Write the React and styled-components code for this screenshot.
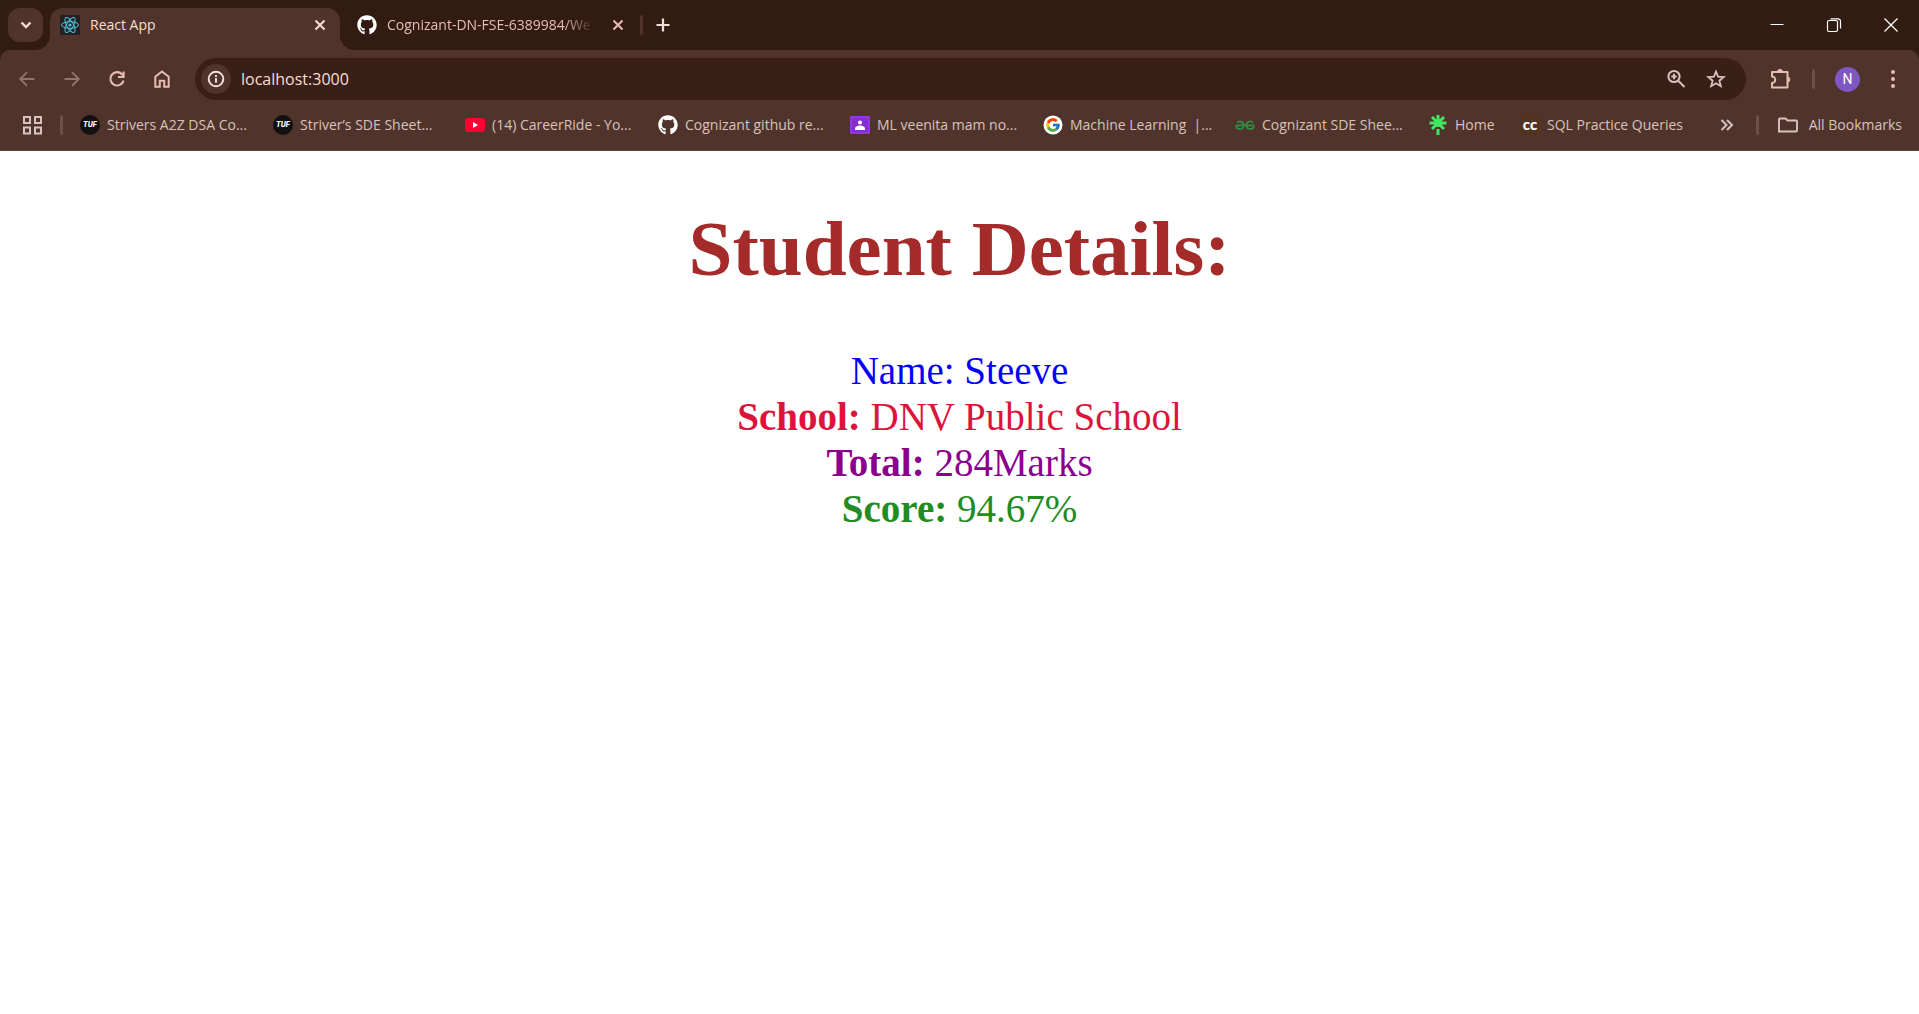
import React from "react";
import styled, { createGlobalStyle } from "styled-components";
import { FaGithub } from "react-icons/fa";
import { FcGoogle } from "react-icons/fc";

const frame = "#321b11";
const bar = "#50342b";
const field = "#3a1f16";
const rose = "#e7bdb1";
const sand = "#d8c2bc";
const cream = "#f5ded8";
const line = "#6f4f45";

const GlobalStyle = createGlobalStyle`
  * { box-sizing: border-box; }
  body { margin: 0; background: #fff; }
  button, input { font: inherit; color: inherit; border: 0; padding: 0; margin: 0; background: none; }
`;

const Browser = styled.div`
  font-family: "Open Sans", "Noto Sans", sans-serif;
  font-size: 14px;
  line-height: 20px;
  color: ${sand};
  background: ${frame};
`;

const TabStrip = styled.div`
  display: flex;
  align-items: stretch;
  height: 50px;
  padding-left: 8px;
`;

const TabSearch = styled.button`
  display: flex;
  align-items: center;
  justify-content: center;
  align-self: center;
  width: 35px;
  height: 34px;
  margin-right: 7px;
  border-radius: 12px;
  background: ${bar};
  color: ${cream};
`;

const Tab = styled.div`
  position: relative;
  display: flex;
  align-items: center;
  gap: 10px;
  width: ${(p) => (p.$active ? 290 : 300)}px;
  margin-top: ${(p) => (p.$active ? 8 : 0)}px;
  padding: ${(p) => (p.$active ? "0 10px 8px 10px" : "0 12px 0 17px")};
  border-radius: 13px 13px 0 0;
  color: ${(p) => (p.$active ? cream : rose)};
  background: ${(p) => (p.$active ? bar : "transparent")};
`;

const TabFoot = styled.span`
  position: absolute;
  bottom: 0;
  ${(p) => p.$side}: -15px;
  width: 15px;
  height: 15px;
  background: radial-gradient(
    circle at top ${(p) => p.$side},
    transparent 15px,
    ${bar} 15px
  );
`;

const TabTitle = styled.span`
  flex: 1;
  overflow: hidden;
  white-space: nowrap;
  font-size: 14px;
  mask-image: ${(p) =>
    p.$fade ? "linear-gradient(to right, #000 calc(100% - 34px), transparent calc(100% - 4px))" : "none"};
`;

const IconButton = styled.button`
  display: flex;
  align-items: center;
  justify-content: center;
  flex: none;
  width: ${(p) => p.$w || 20}px;
  height: ${(p) => p.$h || 20}px;
  color: ${(p) => p.$color || "inherit"};
`;

const Divider = styled.span`
  flex: none;
  width: 3px;
  height: 20px;
  margin-left: ${(p) => p.$left || 0}px;
  border-radius: 2px;
  background: ${line};
`;

const StripDivider = styled(Divider)`
  align-self: center;
  background: ${bar};
`;

const NewTab = styled(IconButton)`
  align-self: center;
  margin-left: 8px;
`;

const WindowControls = styled.div`
  display: flex;
  align-items: center;
  margin-left: auto;
  color: #fff;
`;

const Chrome = styled.div`
  background: ${bar};
  border-radius: 10px 10px 0 0;
  border-bottom: 1px solid #5f4840;
`;

const Toolbar = styled.div`
  display: flex;
  align-items: center;
  padding: 8px 4px 0;
`;

const Omnibox = styled.form`
  display: flex;
  align-items: center;
  flex: 1;
  height: 42px;
  margin: 0 11px;
  padding: 0 10px 0 6px;
  border-radius: 21px;
  background: ${field};
`;

const SiteInfo = styled.button`
  display: flex;
  align-items: center;
  justify-content: center;
  width: 30px;
  height: 30px;
  border-radius: 50%;
  background: ${bar};
  color: ${cream};
`;

const Address = styled.div`
  display: grid;
  flex: 1;
  padding-left: 10px;
  font-size: 16px;
  line-height: 24px;
`;

const AddressInput = styled.input`
  width: 100%;
  outline: none;
  color: ${cream};
`;

const Avatar = styled.button`
  flex: none;
  width: 25px;
  height: 25px;
  margin: 0 10px 0 20px;
  border-radius: 50%;
  background: #7e57c2;
  color: #fff;
  font-family: Roboto, sans-serif;
  font-size: 14px;
`;

const Bookmarks = styled.nav`
  display: flex;
  align-items: center;
  height: 50px;
  padding: 0 17px 0 22px;
`;

const BookmarkList = styled.div`
  display: flex;
  flex: 1;
  margin-left: 17px;
`;

const Bookmark = styled.a`
  display: flex;
  align-items: center;
  gap: ${(p) => p.$gap || 7}px;
  width: ${(p) => (p.$w ? `${p.$w}px` : "auto")};
  color: inherit;
  text-decoration: none;
  white-space: nowrap;
`;

const Badge = styled.span`
  display: flex;
  align-items: center;
  justify-content: center;
  flex: none;
  width: 20px;
  height: 20px;
  padding-bottom: ${(p) => (p.$round ? 0 : 3)}px;
  border-radius: ${(p) => (p.$round ? "50%" : "0")};
  background: ${(p) => p.$bg};
  color: #fff;
  font-family: ${(p) => (p.$round ? "Inter" : "Lato")}, sans-serif;
  font-size: ${(p) => (p.$round ? 7 : 15)}px;
  font-weight: ${(p) => (p.$round ? 800 : 900)};
  font-style: ${(p) => (p.$round ? "italic" : "normal")};
  line-height: 16px;
`;

const BookmarkEnd = styled.div`
  display: flex;
  align-items: center;
  gap: 19px;
`;

const Page = styled.main`
  padding: 53px 8px;
  font-family: "Liberation Serif", "Times New Roman", serif;
  font-size: 39px;
  line-height: 46px;
  text-align: center;
`;

const Heading = styled.h1`
  margin: 0 0 54px;
  font-size: 79px;
  line-height: 90px;
  color: brown;
`;

const Detail = styled.div`
  color: ${(p) => p.$color};
`;

const Stroke = ({ size = 20, w = 2, children }) => (
  <svg width={size} height={size} viewBox="0 0 20 20" fill="none" stroke="currentColor" strokeWidth={w} aria-hidden="true">
    {children}
  </svg>
);

const CloseGlyph = () => (
  <Stroke><path d="M5.5 5.5l9 9M14.5 5.5l-9 9" /></Stroke>
);

const ReactLogo = () => (
  <svg width="20" height="20" viewBox="0 0 20 20" fill="none" stroke="#53c1de" aria-hidden="true">
    <rect width="20" height="20" rx="1" fill="#222" stroke="none" />
    <ellipse cx="10" cy="10" rx="8.5" ry="3.3" />
    <ellipse cx="10" cy="10" rx="8.5" ry="3.3" transform="rotate(60 10 10)" />
    <ellipse cx="10" cy="10" rx="8.5" ry="3.3" transform="rotate(120 10 10)" />
    <circle cx="10" cy="10" r="1.6" fill="#53c1de" stroke="none" />
  </svg>
);

const YouTube = () => (
  <svg width="20" height="20" viewBox="0 0 20 20" aria-hidden="true">
    <rect y="3" width="20" height="14" rx="3" fill="#ff0033" />
    <path d="M8 7l5 3-5 3z" fill="#fff" />
  </svg>
);

const Classroom = () => (
  <svg width="20" height="20" viewBox="0 0 20 20" aria-hidden="true">
    <rect y="1" width="20" height="18" rx="1" fill="#9334e6" />
    <rect x="2" y="3" width="16" height="14" fill="#8430ce" />
    <circle cx="10" cy="7.5" r="2" fill="#fff" />
    <path d="M5 15v-1.5c0-2 3-3 5-3s5 1 5 3V15z" fill="#fff" />
  </svg>
);

const Google = () => (
  <svg width="20" height="20" viewBox="0 0 20 20" aria-hidden="true">
    <circle cx="10" cy="10" r="9.5" fill="#fff" />
    <FcGoogle x="2" y="2" width="16" height="16" size={16} />
  </svg>
);

const Geeks = () => (
  <svg width="20" height="20" viewBox="0 0 20 20" fill="none" stroke="#2f8d46" strokeWidth="1.8" aria-hidden="true">
    <path d="M1 10.3h18M2.2 7.8c1.3-2 6.3-2.2 6.3 2.500 0 5-6.800 5-7.400 0M17.800 7.800c-1.300-2-6.300-2.200-6.300 2.500 0 5 6.800 5 7.400 0" />
  </svg>
);

const Linktree = () => (
  <svg width="20" height="20" viewBox="0 0 20 20" stroke="#43e660" strokeWidth="3" aria-hidden="true">
    <path d="M10 0v12M1.5 8h17M4 2l12 12M16 2L4 14M10 14v6" />
  </svg>
);

const GitHub = () => <FaGithub size={20} color="#fff" aria-hidden="true" />;
const Tuf = () => <Badge $round $bg="#111">TUF</Badge>;
const Cc = () => <Badge $bg="#523320">cc</Badge>;

const bookmarks = [
  { icon: Tuf, text: "Strivers A2Z DSA Co...", w: 193 },
  { icon: Tuf, text: "Striver’s SDE Sheet...", w: 192 },
  { icon: YouTube, text: "(14) CareerRide - Yo...", w: 193 },
  { icon: GitHub, text: "Cognizant github re...", w: 192 },
  { icon: Classroom, text: "ML veenita mam no...", w: 193 },
  { icon: Google, text: "Machine Learning \u00a0|...", w: 192 },
  { icon: Geeks, text: "Cognizant SDE Shee...", w: 193 },
  { icon: Linktree, text: "Home", w: 92 },
  { icon: Cc, text: "SQL Practice Queries" },
];

const details = [
  { label: "School:", value: "DNV Public School", color: "crimson" },
  { label: "Total:", value: "284Marks", color: "darkmagenta" },
  { label: "Score:", value: "94.67%", color: "forestgreen" },
];

export default function App() {
  return (
    <>
      <GlobalStyle />
      <Browser>
        <TabStrip>
          <TabSearch aria-label="Search tabs">
            <Stroke w={2.4}><path d="M5.5 7.5l4.5 4.5 4.500-4.500" /></Stroke>
          </TabSearch>
          <Tab $active>
            <TabFoot $side="left" />
            <TabFoot $side="right" />
            <ReactLogo />
            <TabTitle>React App</TabTitle>
            <IconButton aria-label="Close tab"><CloseGlyph /></IconButton>
          </Tab>
          <Tab>
            <GitHub />
            <TabTitle $fade>Cognizant-DN-FSE-6389984/We</TabTitle>
            <IconButton aria-label="Close tab"><CloseGlyph /></IconButton>
          </Tab>
          <StripDivider />
          <NewTab aria-label="New tab" $w={24} $color={cream}>
            <Stroke w={2.2}><path d="M10 3.5v13M3.5 10h13" /></Stroke>
          </NewTab>
          <WindowControls>
            <IconButton aria-label="Minimize" $w={57} $h={40}>
              <Stroke w={1}><path d="M3.5 9.5h13" /></Stroke>
            </IconButton>
            <IconButton aria-label="Restore" $w={57} $h={40}>
              <Stroke w={1.2}>
                <rect x="3.5" y="5.5" width="10" height="11" rx="1.5" />
                <path d="M6.5 3.8H14a2.500 2.500 0 0 1 2.500 2.500V13.500" />
              </Stroke>
            </IconButton>
            <IconButton aria-label="Close" $w={57} $h={40}>
              <Stroke w={1.3}><path d="M3.5 3.5l13 13M16.5 3.5l-13 13" /></Stroke>
            </IconButton>
          </WindowControls>
        </TabStrip>

        <Chrome>
          <Toolbar>
            <IconButton aria-label="Back" $w={45} $h={42} $color="#94736a">
              <Stroke w={1.8}><path d="M17.5 10H4M10 3.2L3.2 10l6.8 6.8" /></Stroke>
            </IconButton>
            <IconButton aria-label="Forward" $w={45} $h={42} $color="#94736a">
              <Stroke w={1.8}><path d="M2.5 10H16M10 3.2l6.8 6.8-6.8 6.8" /></Stroke>
            </IconButton>
            <IconButton aria-label="Reload" $w={45} $h={42} $color={rose}>
              <Stroke w={2.1}><path d="M16.6 11.5A6.7 6.7 0 1 1 15 5.2L16.5 7M16.6 2.5V8H11" /></Stroke>
            </IconButton>
            <IconButton aria-label="Home" $w={45} $h={42} $color={rose}>
              <Stroke w={2}><path d="M3.3 17.7V7.8L10 2.5l6.7 5.3v9.9h-4.5v-6H7.8v6z" /></Stroke>
            </IconButton>
            <Omnibox onSubmit={(e) => e.preventDefault()}>
              <SiteInfo type="button" aria-label="View site information">
                <Stroke w={1.9}>
                  <circle cx="10" cy="10" r="7.3" />
                  <path d="M10 9v4.8M10 6v1.9" />
                </Stroke>
              </SiteInfo>
              <Address>
                <AddressInput aria-label="Address" defaultValue="localhost:3000" />
              </Address>
              <IconButton type="button" aria-label="Zoom" $w={40} $h={40}>
                <Stroke>
                  <circle cx="8" cy="7.5" r="5.6" />
                  <path d="M12 11.5l6.5 6.5M8 4.8v5.4M5.3 7.5h5.4" />
                </Stroke>
              </IconButton>
              <IconButton type="button" aria-label="Bookmark this tab" $w={40} $h={40}>
                <Stroke w={1.8}>
                  <path d="M10 2.6l2.1 5 5.700.4-4.400 3.700 1.400 5.500L10 14.300 5.200 17.200l1.400-5.500L2.200 8l5.700-.4z" />
                </Stroke>
              </IconButton>
            </Omnibox>
            <IconButton aria-label="Extensions" $w={46} $h={42} $color={rose}>
              <svg width="22" height="22" viewBox="0 0 22 22" fill="none" stroke="currentColor" strokeWidth="2" strokeLinejoin="round" aria-hidden="true">
                <path d="M3 4h15.500v15.500H3v-4.500a3.200 3.200 0 0 0 0-6.500z" />
                <path d="M8.500 3.500a2.500 2 0 0 1 5 0zM18.800 9a2 2.500 0 0 1 0 5z" fill="currentColor" strokeWidth="1" />
              </svg>
            </IconButton>
            <Divider $left={9} />
            <Avatar aria-label="Profile N">N</Avatar>
            <IconButton aria-label="Menu" $w={45} $h={42} $color={rose}>
              <svg width="20" height="20" viewBox="0 0 20 20" fill="currentColor" aria-hidden="true">
                <circle cx="10" cy="3" r="2" /><circle cx="10" cy="10" r="2" /><circle cx="10" cy="17" r="2" />
              </svg>
            </IconButton>
          </Toolbar>

          <Bookmarks aria-label="Bookmarks">
            <IconButton aria-label="Apps">
              <Stroke>
                <path d="M2 2h6v6H2zM13 2h6v6h-6zM2 12.5h6v6H2zM13 12.5h6v6h-6z" />
              </Stroke>
            </IconButton>
            <Divider $left={18} />
            <BookmarkList>
              {bookmarks.map(({ icon: Icon, text, w }) => (
                <Bookmark key={text} href="#" $w={w}>
                  <Icon />
                  {text}
                </Bookmark>
              ))}
            </BookmarkList>
            <BookmarkEnd>
              <IconButton aria-label="More bookmarks">
                <Stroke><path d="M4.5 5l5 5-5 5M10 5l5 5-5 5" /></Stroke>
              </IconButton>
              <Divider />
              <Bookmark href="#" $gap={11}>
                <Stroke w={1.9}>
                  <path d="M1 16.5V4.5a1 1 0 0 1 1-1h5.5l2 2H18a1 1 0 0 1 1 1v9a1 1 0 0 1-1 1z" />
                </Stroke>
                All Bookmarks
              </Bookmark>
            </BookmarkEnd>
          </Bookmarks>
        </Chrome>
      </Browser>

      <Page>
        <Heading>Student Details:</Heading>
        <Detail $color="blue">Name: Steeve</Detail>
        {details.map(({ label, value, color }) => (
          <Detail key={label} $color={color}>
            <b>{label}</b> {value}
          </Detail>
        ))}
      </Page>
    </>
  );
}
